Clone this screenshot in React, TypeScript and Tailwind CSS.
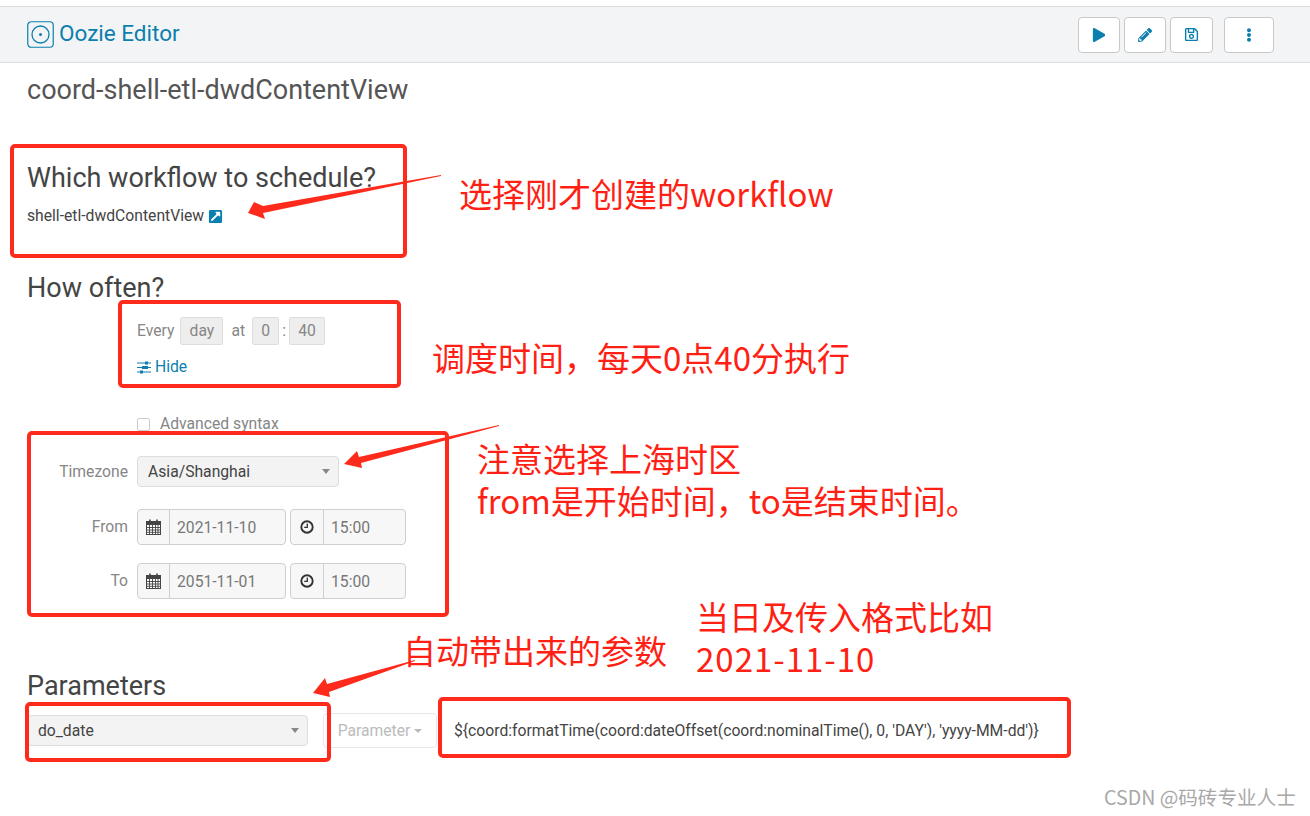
import React from "react";
import { FaPlay, FaPencilAlt, FaRegSave, FaEllipsisV, FaExternalLinkSquareAlt } from "react-icons/fa";

function Logo() {
  return (
    <svg width="27" height="27" viewBox="0 0 27 27" fill="none" stroke="#0b7fad">
      <rect x="0.75" y="0.75" width="25.5" height="25.5" rx="3.5" strokeWidth="1.2" />
      <circle cx="13.5" cy="13.5" r="8.5" strokeWidth="1.3" />
      <circle cx="13.5" cy="13.5" r="1.5" fill="#0b7fad" stroke="none" />
    </svg>
  );
}

function Sliders() {
  return (
    <svg width="15" height="13" viewBox="0 0 15 13" fill="#0b7fad" stroke="none">
      <rect x="0" y="1.5" width="14" height="1" />
      <rect x="0" y="6" width="14" height="1" />
      <rect x="0" y="10.5" width="14" height="1" />
      <rect x="8" y="0.5" width="3" height="3" />
      <rect x="5" y="5" width="6" height="3" />
      <rect x="3" y="9.5" width="3" height="3" />
    </svg>
  );
}

function Calendar() {
  return (
    <svg width="15" height="16" viewBox="0 0 15 16" fill="none" stroke="#444" strokeWidth="1">
      <rect x="0.5" y="2.5" width="14" height="13" fill="#fff" />
      <rect x="0.5" y="2.5" width="14" height="3" fill="#444" />
      <path d="M3.5 6v9M6.5 6v9M9.5 6v9M12 6v9M1 8.5h13M1 11h13M1 13.3h13" strokeWidth="0.9" />
      <path d="M4 0.5v3M11 0.5v3" strokeWidth="1.6" />
    </svg>
  );
}

function Clock() {
  return (
    <svg width="14" height="14" viewBox="0 0 14 14" fill="none" stroke="#333">
      <circle cx="7" cy="7" r="5.7" strokeWidth="1.9" />
      <path d="M7.3 3.5v3.8H4.2" strokeWidth="1.3" />
    </svg>
  );
}

function Caret() {
  return <span className="w-0 h-0 border-x-[4px] border-x-transparent border-t-[5px] border-t-[#888]" />;
}

function HeaderButton({ w, children }: { w: string; children: React.ReactNode }) {
  return (
    <button className={`${w} h-[36px] flex items-center justify-center bg-white border border-[#c8c8c8] rounded-[4px] text-[#0b7fad]`}>
      {children}
    </button>
  );
}

function DateRow({ label, date }: { label: string; date: string }) {
  return (
    <div className="flex items-center h-[36px]">
      <div className="w-[101px] text-right text-[15.7px] text-[#868686]">{label}</div>
      <div className="ml-[9px] flex gap-[4px]">
        <div className="w-[149px] h-[36px] flex border border-[#cfcfcf] rounded-[4px] bg-[#f7f7f7] text-[15.7px] text-[#777]">
          <div className="w-[32px] flex items-center justify-center border-r border-[#cfcfcf]"><Calendar /></div>
          <div className="flex items-center pl-[7px] pt-[1px]">{date}</div>
        </div>
        <div className="w-[116px] h-[36px] flex border border-[#cfcfcf] rounded-[4px] bg-[#f7f7f7] text-[15.7px] text-[#777]">
          <div className="w-[33px] flex items-center justify-center border-r border-[#cfcfcf]"><Clock /></div>
          <div className="flex items-center pl-[7px] pt-[1px]">15:00</div>
        </div>
      </div>
    </div>
  );
}

function RedBox({ className }: { className: string }) {
  return <div className={`absolute border-[4px] border-[#fe2a1c] rounded-[5px] ${className}`} />;
}

function Note({ className, children }: { className: string; children: React.ReactNode }) {
  return (
    <div className={`absolute text-[#ff1f14] text-[33px] leading-[42px] whitespace-nowrap font-['Noto_Sans_CJK_SC',sans-serif] ${className}`}>
      {children}
    </div>
  );
}

export default function App() {
  return (
    <div className="relative w-[1310px] h-[816px] overflow-hidden bg-white font-['Roboto',sans-serif] text-[#444]">
      <div className="pt-[6px]">
        <header className="h-[57px] flex items-center justify-between bg-[#f3f4f6] border-y border-[#dcdde0] pl-[27px] pr-[36px]">
          <div className="flex items-center gap-[5px] text-[#0b7fad] text-[22.5px]">
            <Logo />
            <span className="-translate-y-[1px]">Oozie Editor</span>
          </div>
          <div className="flex">
            <div className="flex gap-[4px]">
              <HeaderButton w="w-[42px]"><FaPlay size={14} /></HeaderButton>
              <HeaderButton w="w-[42px]"><FaPencilAlt size={14} /></HeaderButton>
              <HeaderButton w="w-[43px]"><FaRegSave size={15} /></HeaderButton>
            </div>
            <div className="ml-[11px]">
              <HeaderButton w="w-[50px]"><FaEllipsisV size={14} /></HeaderButton>
            </div>
          </div>
        </header>
      </div>

      <main className="pl-[27px]">
        <h1 className="mt-[9px] text-[27px] leading-[36px] text-[#555]">coord-shell-etl-dwdContentView</h1>

        <h2 className="mt-[52px] text-[27px] leading-[36px]">Which workflow to schedule?</h2>
        <div className="mt-[10px] flex items-center gap-[4px] text-[15.7px] leading-[20px]">
          <span>shell-etl-dwdContentView</span>
          <FaExternalLinkSquareAlt size={15} className="text-[#0b7fad]" />
        </div>

        <h2 className="mt-[44px] text-[27px] leading-[36px]">How often?</h2>

        <div className="ml-[110px] mt-[11px] flex items-center h-[28px] text-[15.7px] text-[#868686]">
          <span>Every</span>
          <span className="ml-[6px] w-[43px] h-[28px] flex items-center justify-center bg-[#eee] border border-[#ddd] rounded-[2px]">day</span>
          <span className="ml-[8px]">at</span>
          <span className="ml-[7px] w-[27px] h-[28px] flex items-center justify-center bg-[#eee] border border-[#ddd] rounded-[2px]">0</span>
          <span className="mx-[3px] w-[4px] text-center">:</span>
          <span className="w-[36px] h-[28px] flex items-center justify-center bg-[#eee] border border-[#ddd] rounded-[2px]">40</span>
        </div>
        <div className="ml-[110px] mt-[12px] flex items-center gap-[3px] text-[15.7px] leading-[20px] text-[#0b7fad]">
          <Sliders />
          <span>Hide</span>
        </div>

        <div className="ml-[110px] mt-[37px] flex items-center gap-[10px] text-[15.7px] leading-[20px] text-[#868686]">
          <span className="w-[13px] h-[13px] bg-white border border-[#ccc] rounded-[2px]" />
          <span>Advanced syntax</span>
        </div>

        <div className="mt-[22px] flex items-center h-[31px]">
          <div className="w-[101px] text-right text-[15.7px] text-[#868686]">Timezone</div>
          <div className="ml-[9px] w-[202px] h-[31px] flex items-center justify-between pl-[10px] pr-[8px] bg-[#f3f3f3] border border-[#ddd] rounded-[4px] text-[15.7px]">
            <span>Asia/Shanghai</span>
            <Caret />
          </div>
        </div>

        <div className="mt-[22px] flex flex-col gap-[18px]">
          <DateRow label="From" date="2021-11-10" />
          <DateRow label="To" date="2051-11-01" />
        </div>

        <h2 className="mt-[69px] text-[27px] leading-[36px]">Parameters</h2>

        <div className="mt-[9px] flex items-center">
          <div className="w-[281px] h-[31px] flex items-center justify-between pl-[10px] pr-[8px] bg-[#f3f3f3] border border-[#ddd] rounded-[4px] text-[15.7px]">
            <span>do_date</span>
            <Caret />
          </div>
          <div className="ml-[15px] w-[114px] h-[35px] flex items-center justify-center gap-[4px] border border-[#e8e8e8] rounded-[4px] text-[15.7px] text-[#bbb]">
            <span>Parameter</span>
            <span className="w-0 h-0 border-x-[4px] border-x-transparent border-t-[4px] border-t-[#bbb]" />
          </div>
          <div className="ml-[17px] text-[15.7px]">{"${coord:formatTime(coord:dateOffset(coord:nominalTime(), 0, 'DAY'), 'yyyy-MM-dd')}"}</div>
        </div>
      </main>

      <RedBox className="left-[10px] top-[144px] w-[397px] h-[114px]" />
      <RedBox className="left-[118px] top-[300px] w-[283px] h-[88px]" />
      <RedBox className="left-[27px] top-[431px] w-[422px] h-[186px]" />
      <RedBox className="left-[25px] top-[702px] w-[306px] h-[60px]" />
      <RedBox className="left-[438px] top-[697px] w-[633px] h-[61px]" />

      <svg className="absolute left-0 top-0 pointer-events-none" width="1310" height="816" fill="#fe2a1c">
        <polygon points="441,175 263,206 254,202 248,213 265,219 263,213 441,176" />
        <polygon points="499,425 359,457 357,451 344,464 362,468 361,463 499,426" />
        <polygon points="415,660 327,684 325,678 313,693 330,697 329,692 415,661" />
      </svg>

      <Note className="left-[459px] top-[172px]">选择刚才创建的workflow</Note>
      <Note className="left-[432px] top-[336px]">{"调度时间\uFF0C每天0点40分执行"}</Note>
      <Note className="left-[477px] top-[437px]">
        注意选择上海时区
        <br />
        {"from是开始时间\uFF0Cto是结束时间。"}
      </Note>
      <Note className="left-[403px] top-[629px]">自动带出来的参数</Note>
      <Note className="left-[696px] top-[595px]">
        当日及传入格式比如
        <br />
        <span className="tracking-[1px]">2021-11-10</span>
      </Note>

      <div className="absolute left-[1104px] top-[784px] text-[19.6px] leading-[26px] text-[#a8a8a8] whitespace-nowrap font-['Noto_Sans_CJK_SC',sans-serif]">
        CSDN @码砖专业人士
      </div>
    </div>
  );
}
